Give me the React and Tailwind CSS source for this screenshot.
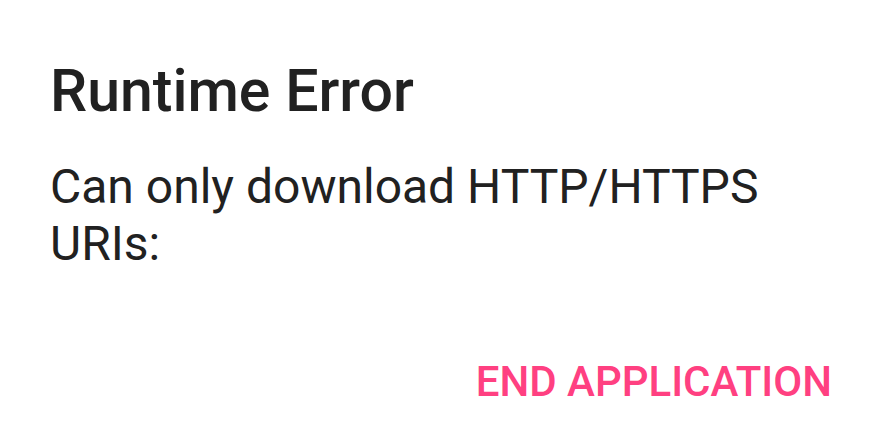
import React from "react";

export default function App() {
  return (
    <div
      className="w-[882px] h-[442px] bg-white flex flex-col px-[50px] pt-[57px]"
      style={{ fontFamily: "Roboto, 'Noto Sans', sans-serif" }}
    >
      <h1 className="text-[59px] leading-[68px] font-medium text-[#212121]">Runtime Error</h1>
      <p className="mt-[33px] text-[48px] leading-[57px] text-[#212121]">
        Can only download HTTP/HTTPS URIs:
      </p>
      <div className="flex justify-end mt-[85px]">
        <button className="text-[42px] leading-[50px] font-medium text-[#ff4081]">
          END APPLICATION
        </button>
      </div>
    </div>
  );
}
